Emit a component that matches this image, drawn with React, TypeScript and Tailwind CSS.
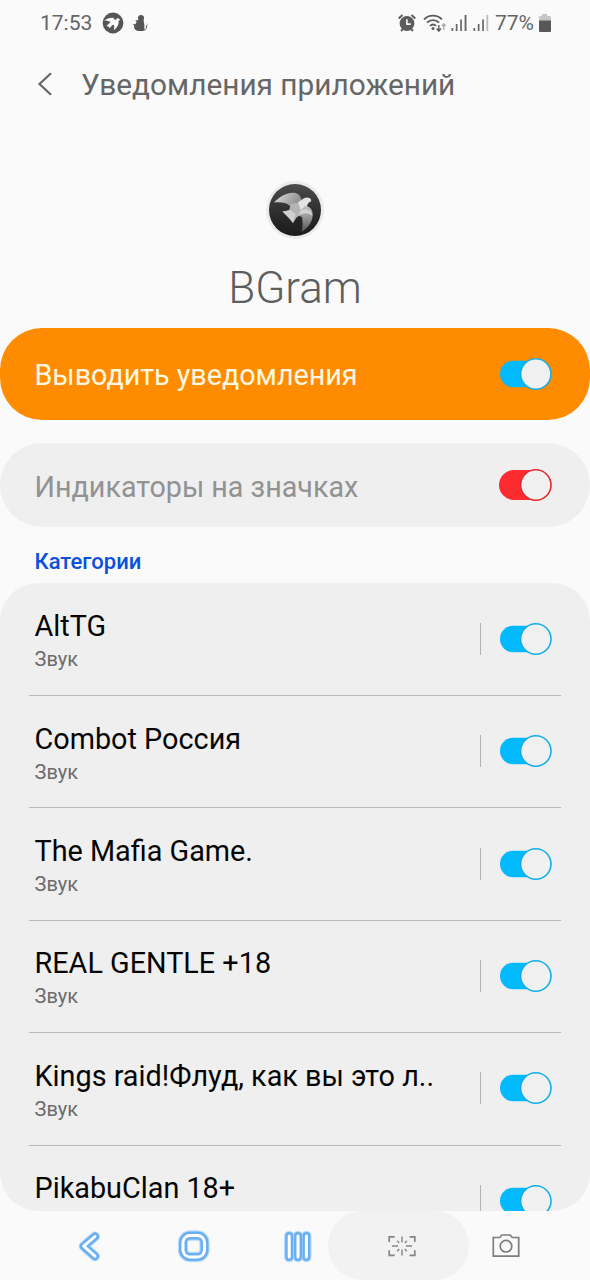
import React from "react";

interface SwitchProps {
  color?: "blue" | "red";
}

const Switch: React.FC<SwitchProps> = ({ color = "blue" }) => {
  const fill = color === "red" ? "#fc2b2f" : "#02bafd";
  const stroke = color === "red" ? "#e2272e" : "#14aee6";
  return (
    <svg className="shrink-0" width="54" height="34" viewBox="0 0 54 34">
      {color === "red" ? (
        <rect x="1" y="2" width="50" height="30" rx="15" fill={fill} />
      ) : (
        <rect x="2" y="3.7" width="48" height="26.6" rx="13.3" fill={fill} />
      )}
      <circle cx="37.8" cy="17" r="15.2" fill="#f0f0f0" stroke={stroke} strokeWidth="1.6" />
    </svg>
  );
};

interface CategoryRowProps {
  title: string;
  subtitle?: string;
}

const CategoryRow: React.FC<CategoryRowProps> = ({ title, subtitle }) => (
  <div className="mx-[29px] flex h-[112.4px] shrink-0 items-center border-b border-[#b9b9b9] pb-px pl-[5.5px] pr-[9px]">
    <div className="h-[66px] flex-1 whitespace-nowrap pt-[2.5px]">
      <div className="text-[28.8px] leading-[37px] text-[#050505]">{title}</div>
      {subtitle && <div className="text-[20px] leading-[28px] text-[#6b6b6b]">{subtitle}</div>}
    </div>
    <div className="mr-[17px] h-8 w-px bg-[#b2b2b2]" />
    <Switch />
  </div>
);

const categories: CategoryRowProps[] = [
  { title: "AltTG", subtitle: "Звук" },
  { title: "Combot Россия", subtitle: "Звук" },
  { title: "The Mafia Game.", subtitle: "Звук" },
  { title: "REAL GENTLE +18", subtitle: "Звук" },
  { title: "Kings raid!Флуд, как вы это л..", subtitle: "Звук" },
  { title: "PikabuClan 18+" },
];

const StatusBar = () => (
  <div className="flex h-[46px] items-center pl-10 pr-[38px] text-[#656565]">
    <span className="w-[53px] whitespace-nowrap pt-px text-[21px]">17:53</span>
    <svg className="ml-[9px]" width="22" height="22" viewBox="0 0 22 22">
      <circle cx="11" cy="11" r="10.4" fill="#565656" />
      <path
        d="M2 8.6C5 6.6 8 5.4 11.4 5.8l1.6 2.4 2.2-2 1.6.2 1.4 1.7-1.6.7c.5 3.6-1 6.8-4.8 9.4.5-2.4.6-3.9.1-5.4l-1.7.4-2.6 3-.7-1.5-2.4-.6 4-4C6.5 9 4.500 8.500 2 8.600z"
        fill="#fafafa"
      />
    </svg>
    <svg className="ml-2" width="18" height="18" viewBox="0 0 18 18" fill="#565656">
      <circle cx="9" cy="4" r="3" />
      <path d="M6.5 6 3.2 6.6l1.5 1.5-1.3 2.1L.8 10l1.4 1.5C1.6 14.5 3.5 16.7 6.5 17h4c2.9-.3 4.9-2.5 4.5-5.3l1-2.2-1.5 1.8-.6.7c.6 2 0 3-1.500 3.400-.2-1.700.5-3.300-.6-7.600l-.2-2z" />
    </svg>
    <div className="flex-1" />
    {/* alarm */}
    <svg width="18" height="18" viewBox="0 0 18 18">
      <circle cx="9" cy="9.5" r="7.4" fill="#5c5c5c" />
      <path d="M.7 4.4 4.5 1M13.5 1l3.8 3.4M3 17l2-2M15 17l-2-2" stroke="#5c5c5c" strokeWidth="2" />
      <path d="M8.900 5.200v4.900h3.800" fill="none" stroke="#fafafa" strokeWidth="1.6" />
    </svg>
    {/* wifi */}
    <svg className="ml-[7px]" width="24" height="19" viewBox="0 0 24 19" fill="none">
      <path
        d="M1 5.4c5.1-5 12.9-5 18 0M4 8.7c3.5-3.5 8.6-3.5 12.1 0M7 11.9c1.9-1.8 4.2-1.8 6.1 0"
        stroke="#5c5c5c"
        strokeWidth="1.9"
      />
      <circle cx="10" cy="14.5" r="1.5" fill="#5c5c5c" />
      <path d="M15.8 11v6M13.7 14.5l2.1 2.6 2.1-2.6" stroke="#5c5c5c" strokeWidth="1.4" />
      <path d="M20.8 16v-6M18.8 12.2l2-2.4 2 2.4" stroke="#aaa" strokeWidth="1.3" />
    </svg>
    <svg className="ml-[4px]" width="17" height="18" viewBox="0 0 17 18" fill="#686868">
      <path d="M.5 14h1.7v3H.5zM4.8 10h1.7v7H4.8zM9.2 5.5h1.7V17H9.2zM13.6 1h1.9v16h-1.9z" />
    </svg>
    <svg className="ml-[5px]" width="17" height="18" viewBox="0 0 17 18" fill="#686868">
      <path d="M.5 14h1.7v3H.5zM4.8 10h1.7v7H4.8zM9.2 5.5h1.7V17H9.2z" />
      <path d="M13.4 1h1.8v16h-1.8z" fill="#bcbcbc" />
    </svg>
    <span className="ml-[5px] w-[41px] whitespace-nowrap pt-px text-[21px]">77%</span>
    <svg className="ml-[2px]" width="14" height="20" viewBox="0 0 14 20">
      <path d="M3.8 1h5.4v2H12a1 1 0 0 1 1 1v4H1V4a1 1 0 0 1 1-1h1.8z" fill="#c6c6c6" />
      <path d="M1 7.5h12V18a1 1 0 0 1-1 1H2a1 1 0 0 1-1-1z" fill="#585858" />
    </svg>
  </div>
);

const AppLogo = () => (
  <svg width="60" height="60" viewBox="0 0 60 60">
    <defs>
      <linearGradient id="disc" x1="0" y1="0" x2="0" y2="1">
        <stop offset="0" stopColor="#4c4c4c" />
        <stop offset=".5" stopColor="#303030" />
        <stop offset="1" stopColor="#1a1a1a" />
      </linearGradient>
      <linearGradient id="wing" x1="0" y1="0" x2="1" y2=".4">
        <stop offset="0" stopColor="#dedede" />
        <stop offset=".55" stopColor="#b0b0b0" />
        <stop offset="1" stopColor="#8a8a8a" />
      </linearGradient>
      <linearGradient id="wingRight" x1="0" y1="0" x2="0" y2="1">
        <stop offset="0" stopColor="#c4c4c4" />
        <stop offset=".5" stopColor="#909090" />
        <stop offset="1" stopColor="#555" />
      </linearGradient>
    </defs>
    <circle cx="30" cy="30" r="29" fill="#e9ebec" />
    <circle cx="30" cy="30" r="26" fill="url(#disc)" />
    {/* left wing */}
    <path d="M9 22.5C14 17 21 13 28 12.8c4.500 0 7 2 8.500 6.700L37 25l-9 5-3.500-4.500C21 22.500 16 22 9 22.500z" fill="url(#wing)" />
    {/* tail and body */}
    <path d="m17.500 31.500 6.500-1 2-7 11-1 4 5-6.500 8-3 2-3.500 5.500-3.500-4z" fill="#b4b4b4" />
    <path d="m17.500 31.500 8-1.500 5 4-2.500 9-3.500-5z" fill="#d0d0d0" />
    {/* head */}
    <path d="M33 22c2-1 4-2.500 6-3.800 3-1.200 6-.6 7 1.300l.2 1.700-2.700 1.500-2 4-6 3z" fill="#e2e2e2" />
    {/* right wing */}
    <path d="M40 25.500c6 1 8.500 5.500 7.500 11.500-1 6-5 11.500-11 15 1.500-5 1.200-10 .5-15l-4-1.500z" fill="url(#wingRight)" />
    <path d="M36 30c6-2 10.500 0 11.500 6-3-3-7-3.500-14.500-.5z" fill="#d2d2d2" />
  </svg>
);

const NavBar = () => (
  <div className="flex h-[69px] items-center bg-[#fafafa]">
    <svg className="ml-[74px]" width="32" height="40" viewBox="0 0 32 40" fill="none" strokeLinecap="round" strokeLinejoin="round">
      <path d="M21 10.5 9.7 20.2 21 30.2" stroke="#b8dafa" strokeWidth="10" />
      <path d="M21 10.5 9.7 20.2 21 30.2" stroke="#6aaff2" strokeWidth="8" />
      <path d="M21 10.5 9.7 20.2 21 30.2" stroke="#fff" strokeWidth="2.9" />
    </svg>
    <svg className="ml-[68px]" width="40" height="40" viewBox="0 0 40 40" fill="none">
      <rect x="9" y="9.5" width="21.5" height="21.5" rx="7" stroke="#b8dafa" strokeWidth="10.3" />
      <rect x="9" y="9.5" width="21.5" height="21.5" rx="7" stroke="#6aaff2" strokeWidth="8" />
      <rect x="9" y="9.5" width="21.5" height="21.5" rx="7" stroke="#fff" strokeWidth="3" />
    </svg>
    <svg className="ml-[64px]" width="40" height="40" viewBox="0 0 40 40" fill="none" strokeLinecap="round">
      <path d="M11.2 10v21M20 10v21M28.4 10v21" stroke="#b8dafa" strokeWidth="10.3" />
      <path d="M11.2 10v21M20 10v21M28.4 10v21" stroke="#6aaff2" strokeWidth="8" />
      <path d="M11.2 10v21M20 10v21M28.4 10v21" stroke="#fff" strokeWidth="3" />
    </svg>
    <div className="ml-[10px] flex h-[69px] w-[141px] items-center justify-center rounded-full bg-[#f2f2f2] pl-[6px]">
      <svg width="30" height="24" viewBox="0 0 30 24" fill="none" stroke="#858585" strokeWidth="1.7">
        <path d="M2.2 8V2.8h5.500M22.500 2.800h5.300V8M27.800 16.300v5h-5.300M7.700 21.300H2.200v-5" />
        <path
          d="M15 2.5v6M15 15.5v6M5 12h6M19 12h6M10.2 6.8l2 2.2M19.8 6.8l-2 2.2M10.2 17.2l2-2.2M19.8 17.2l-2-2.2"
          strokeWidth="1.4"
        />
      </svg>
    </div>
    <svg className="ml-[22px]" width="30" height="26" viewBox="0 0 30 26" fill="none" stroke="#7d7d7d" strokeWidth="1.7">
      <path d="M2.3 4.5h6.500l2-2.500h8.400l2 2.500h6.500v18.700H2.300z" />
      <circle cx="15" cy="13.2" r="5.8" />
    </svg>
  </div>
);

export default function App() {
  return (
    <div className="flex h-[1280px] w-[590px] flex-col overflow-hidden bg-[#fafafa] font-['Roboto',sans-serif]">
      <StatusBar />
      <header className="flex h-[78px] items-center pl-[37px] text-[#666]">
        <svg className="-mt-0.5" width="16" height="24" viewBox="0 0 16 24" fill="none" stroke="#666" strokeWidth="2.2">
          <path d="M14 1.2 2.5 12 14 22.8" />
        </svg>
        <h1 className="ml-[28px] whitespace-nowrap pt-px text-[29.8px]">Уведомления приложений</h1>
      </header>
      <section className="flex h-[204px] flex-col items-center pt-[56px]">
        <AppLogo />
        <h2 className="mt-[20px] text-[44px] font-light leading-[56px] text-[#5e5e5e]">BGram</h2>
      </section>
      <div className="flex h-[92px] shrink-0 items-center justify-between rounded-[42px] bg-[#ff8c00] pl-[34.5px] pr-[38px]">
        <span className="whitespace-nowrap pt-[3px] text-[28.7px] text-[#fff8e3]">Выводить уведомления</span>
        <Switch />
      </div>
      <div className="mt-[23px] flex h-[84px] shrink-0 items-center justify-between rounded-[42px] bg-[#efefef] pl-[34.5px] pr-[38px]">
        <span className="whitespace-nowrap pt-[5px] text-[28.7px] text-[#929292]">Индикаторы на значках</span>
        <Switch color="red" />
      </div>
      <div className="flex h-14 shrink-0 items-center pl-[34.5px] pt-[13px] text-[22px] font-medium text-[#0b50dc]">
        Категории
      </div>
      <main className="flex h-[628px] shrink-0 flex-col overflow-hidden rounded-[38px] bg-[#efefef] pt-[0.6px]">
        {categories.map((c) => (
          <CategoryRow key={c.title} {...c} />
        ))}
      </main>
      <NavBar />
    </div>
  );
}
